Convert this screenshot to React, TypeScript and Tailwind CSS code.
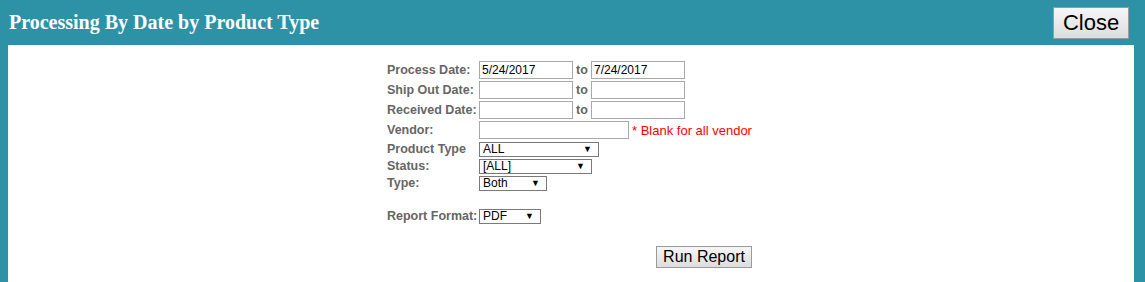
import React from "react";

const label = "text-[12.5px] font-bold text-[#666666] leading-none whitespace-nowrap shrink-0";
const inputBox =
  "h-[18px] border border-[#a9a9a9] bg-white px-[2px] text-[12px] text-black flex items-center leading-none";

function Select({ value, width }: { value: string; width: number }) {
  return (
    <div
      className="h-[15px] border border-[#7a7a7a] bg-white flex items-center justify-between pl-[3px] pr-[6px] text-[12px] text-black leading-none"
      style={{ width }}
    >
      <span>{value}</span>
      <span className="text-[9px]">▼</span>
    </div>
  );
}

function DateRow({ name, from, to }: { name: string; from?: string; to?: string }) {
  return (
    <div className="flex items-center h-[20px]">
      <div className={`${label} w-[92px]`}>{name}</div>
      <div className={`${inputBox} w-[94px]`}>{from}</div>
      <span className={`${label} w-[18px] text-center`}>to</span>
      <div className={`${inputBox} w-[94px]`}>{to}</div>
    </div>
  );
}

export default function App() {
  return (
    <div
      className="w-[1145px] h-[282px] bg-[#2e92a7] flex flex-col overflow-hidden"
      style={{ fontFamily: '"Liberation Sans", Arial, sans-serif' }}
    >
      {/* Title bar */}
      <div className="h-[45px] shrink-0 flex justify-between items-start pl-[9px] pr-[16px]">
        <h1 className="pt-[12px] text-[20px] leading-[20px] font-bold text-white font-['Liberation_Serif',serif]">
          Processing By Date by Product Type
        </h1>
        <button className="mt-[7px] w-[76px] h-[32px] border border-[#9a9a9a] bg-gradient-to-b from-[#f6f6f6] to-[#dddddd] text-[22px] leading-none text-black">
          Close
        </button>
      </div>

      {/* Report criteria panel */}
      <div className="flex-1 ml-[8px] w-[1126px] bg-white pt-[15px] pl-[379px]">
        <DateRow name="Process Date:" from="5/24/2017" to="7/24/2017" />
        <DateRow name="Ship Out Date:" />
        <DateRow name="Received Date:" />

        <div className="flex items-center h-[20px]">
          <div className={`${label} w-[92px]`}>Vendor:</div>
          <div className={`${inputBox} w-[150px]`}></div>
          <span className="ml-[3px] text-[13px] text-[#ff0000] leading-none">* Blank for all vendor</span>
        </div>

        <div className="flex items-center h-[17px] pt-[1px]">
          <div className={`${label} w-[92px]`}>Product Type</div>
          <Select value="ALL" width={120} />
        </div>
        <div className="flex items-center h-[17px] pt-[1px]">
          <div className={`${label} w-[92px]`}>Status:</div>
          <Select value="[ALL]" width={113} />
        </div>
        <div className="flex items-center h-[17px] pt-[1px]">
          <div className={`${label} w-[92px]`}>Type:</div>
          <Select value="Both" width={68} />
        </div>

        <div className="flex items-center h-[18px] mt-[16px]">
          <div className={`${label} w-[92px]`}>Report Format:</div>
          <Select value="PDF" width={62} />
        </div>

        <div className="pl-[269px] mt-[20px]">
          <button className="w-[96px] h-[22px] border border-[#9a9a9a] bg-gradient-to-b from-[#f6f6f6] to-[#dddddd] text-[16px] leading-none text-black">
            Run Report
          </button>
        </div>
      </div>
    </div>
  );
}
